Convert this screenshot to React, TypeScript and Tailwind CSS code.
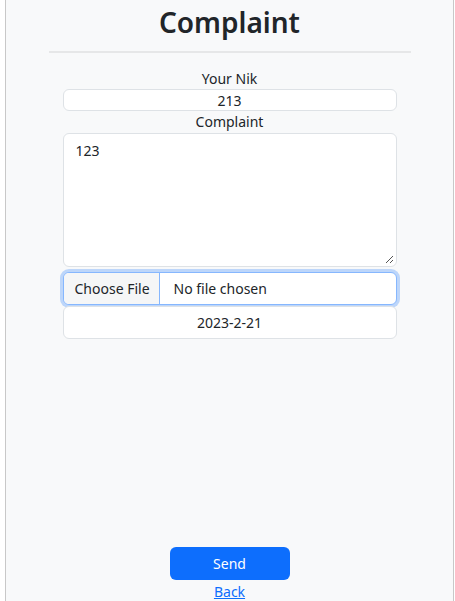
import React from "react";

export default function App() {
  const font = { fontFamily: '"Noto Sans", "Open Sans", sans-serif' };
  return (
    <div className="w-[455px] h-[601px] bg-white overflow-hidden" style={font}>
      <div className="ml-[5px] w-[449px] h-[601px] border-x border-[#c8c8c8] bg-[#f8f9fa] flex flex-col items-center">
        <h1 className="mt-[4px] text-[28px] leading-[36px] font-semibold text-[#212529]">Complaint</h1>
        <div className="mt-[11px] w-[362px] h-[2px] bg-[#e6e7e8]" />
        <div className="mt-[16px] text-[14px] leading-[20px] text-[#212529]">Your Nik</div>
        <div className="w-[334px] h-[22px] bg-white border border-[#dee2e6] rounded-[6px] flex items-center justify-center text-[14px] text-[#212529]">213</div>
        <div className="text-[14px] leading-[22px] text-[#212529]">Complaint</div>
        <div className="relative w-[334px] h-[134px] bg-white border border-[#dee2e6] rounded-[6px] px-[12px] py-[6px] text-[14px] leading-[22px] text-[#212529]">
          123
          <svg className="absolute right-[2px] bottom-[2px]" width="9" height="9" viewBox="0 0 9 9">
            <line x1="1" y1="8" x2="8" y2="1" stroke="#555" strokeWidth="1" />
            <line x1="5" y1="8" x2="8" y2="5" stroke="#555" strokeWidth="1" />
          </svg>
        </div>
        <div className="mt-[5px] w-[334px] h-[33px] bg-white border border-[#86b7fe] rounded-[6px] shadow-[0_0_0_3px_rgba(13,110,253,0.25)] flex items-stretch overflow-hidden text-[14px] text-[#212529]">
          <div className="w-[96px] bg-[#f5f6f7] border-r border-[#86b7fe] flex items-center pl-[11px]">Choose File</div>
          <div className="flex items-center pl-[14px]">No file chosen</div>
        </div>
        <div className="mt-[1px] w-[334px] h-[33px] bg-white border border-[#dee2e6] rounded-[6px] flex items-center justify-center text-[14px] text-[#212529]">2023-2-21</div>
        <div className="flex-1" />
        <button className="w-[120px] h-[33px] bg-[#0d6efd] rounded-[6px] text-white text-[14px] flex items-center justify-center">Send</button>
        <a className="mt-[3px] text-[14px] leading-[18px] text-[#0d6efd] underline">Back</a>
      </div>
    </div>
  );
}
